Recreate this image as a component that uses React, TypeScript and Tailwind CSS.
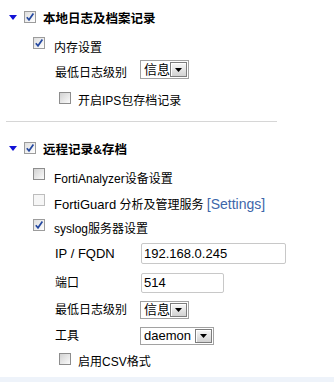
import React from "react";

type BoxProps = { checked?: boolean; disabled?: boolean };

function Box({ checked, disabled }: BoxProps) {
  const look = disabled
    ? "border-[#bdbdbd] bg-[#f6f6f6]"
    : checked
      ? "border-[#9c9c9c] bg-linear-to-br from-[#dedede] to-[#ffffff]"
      : "border-[#8d8d8d] bg-linear-to-br from-[#d2d2d2] to-[#fbfbfb]";
  return (
    <span className={`flex h-[12px] w-[12px] shrink-0 items-center justify-center border ${look}`}>
      {checked && (
        <svg width="10" height="10" viewBox="0 0 10 10">
          <path d="M1.8 5.2 L4 7.8 L8.4 1.6" fill="none" stroke="#2448a0" strokeWidth="1.7" />
        </svg>
      )}
    </span>
  );
}

function Tri() {
  return (
    <svg width="8" height="5" viewBox="0 0 8 5" className="shrink-0">
      <polygon points="0,0 8,0 4,5" fill="#1212d6" />
    </svg>
  );
}

function Select({ value, textW }: { value: string; textW: string }) {
  return (
    <div className="flex h-full items-stretch border border-[#a2a2a2] bg-white p-px">
      <span className={`flex items-center pl-[2px] text-[13px] ${textW}`}>{value}</span>
      <span className="flex w-[17px] items-center justify-center border border-[#7d7d7d] bg-linear-to-b from-[#f8f8f8] to-[#d2d2d2] shadow-[inset_1px_1px_0_#ffffff]">
        <svg width="7" height="4" viewBox="0 0 7 4">
          <polygon points="0,0 7,0 3.5,4" fill="#000" />
        </svg>
      </span>
    </div>
  );
}

function Field({ value, w }: { value: string; w: string }) {
  return (
    <div className={`flex h-full items-center rounded-[2px] border border-[#c8c8c8] bg-white px-[2px] text-[13px] ${w}`}>
      {value}
    </div>
  );
}

export default function App() {
  return (
    <div className="h-[382px] w-[334px] overflow-hidden bg-white text-[12px] text-black font-['Liberation_Sans','Noto_Sans_CJK_SC',sans-serif]">
      <div className="pt-[8px]">
        {/* 本地日志 */}
        <div className="flex h-[23px] items-center pl-[9px]">
          <span className="mb-[4px]">
            <Tri />
          </span>
          <span className="mb-[5px] ml-[7px]">
            <Box checked />
          </span>
          <b className="ml-[7px] text-[12.5px] font-bold">本地日志及档案记录</b>
        </div>

        <div className="mt-[5px] flex h-[23px] items-center pl-[33px]">
          <span className="mb-[9px]">
            <Box checked />
          </span>
          <span className="ml-[9px]">内存设置</span>
        </div>

        <div className="flex h-[21px] items-center pl-[55px]">
          <span className="mt-[6px] w-[85px]">最低日志级别</span>
          <div className="h-[19px]">
            <Select value="信息" textW="w-[28px]" />
          </div>
        </div>

        <div className="mt-[11px] flex h-[20px] items-center pl-[59px]">
          <span className="mb-[6px]">
            <Box />
          </span>
          <span className="ml-[7px]">开启IPS包存档记录</span>
        </div>

        <div className="ml-[6px] mt-[10px] h-px w-[271px] bg-[#d6d6d6]" />

        {/* 远程记录 */}
        <div className="mt-[17px] flex h-[23px] items-center pl-[9px]">
          <span className="mb-[4px]">
            <Tri />
          </span>
          <span className="mb-[5px] ml-[7px]">
            <Box checked />
          </span>
          <b className="ml-[7px] text-[12.5px] font-bold">远程记录&amp;存档</b>
        </div>

        <div className="mt-[6px] flex h-[22px] items-center pl-[33px]">
          <span className="mb-[10px]">
            <Box />
          </span>
          <span className="ml-[9px]">FortiAnalyzer设备设置</span>
        </div>

        <div className="mt-[3px] flex h-[22px] items-center pl-[33px]">
          <span className="mb-[8px]">
            <Box disabled />
          </span>
          <span className="ml-[9px]">
            <span className="text-[13px]">FortiGuard</span> 分析及管理服务{" "}
            <span className="text-[14px] text-[#3d66aa]">[Settings]</span>
          </span>
        </div>

        <div className="mt-[3px] flex h-[22px] items-center pl-[33px]">
          <span className="mb-[8px]">
            <Box checked />
          </span>
          <span className="ml-[9px]">syslog服务器设置</span>
        </div>

        <div className="mt-[3px] flex h-[21px] items-center pl-[55px]">
          <span className="w-[86px] text-[13px]">IP / FQDN</span>
          <Field value="192.168.0.245" w="w-[145px]" />
        </div>

        <div className="mt-[9px] flex h-[20px] items-center pl-[55px]">
          <span className="w-[86px]">端口</span>
          <Field value="514" w="w-[83px]" />
        </div>

        <div className="mt-[8px] flex h-[18px] items-center pl-[55px]">
          <span className="w-[85px]">最低日志级别</span>
          <div className="h-[18px]">
            <Select value="信息" textW="w-[28px]" />
          </div>
        </div>

        <div className="mt-[8px] flex h-[18px] items-center pl-[55px]">
          <span className="w-[85px]">工具</span>
          <div className="h-[18px]">
            <Select value="daemon" textW="w-[53px]" />
          </div>
        </div>

        <div className="mt-[7px] flex h-[20px] items-center pl-[59px]">
          <span className="mb-[7px]">
            <Box />
          </span>
          <span className="ml-[7px]">启用CSV格式</span>
        </div>

        <div className="mt-[5px] h-[5px] w-full bg-[#eef3fa]" />
      </div>
    </div>
  );
}
